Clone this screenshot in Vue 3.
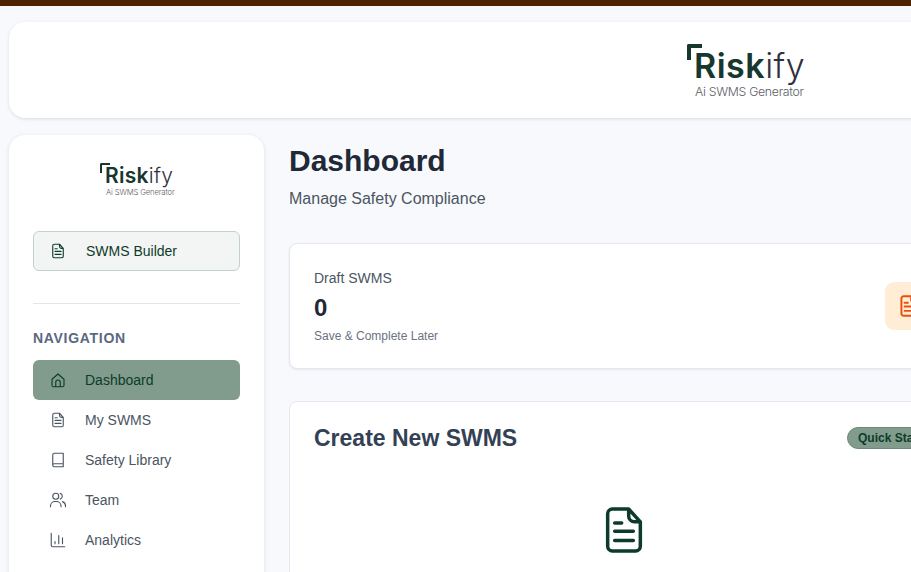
<template>
  <div class="page">
    <div class="top-strip"></div>

    <header class="header">
      <div class="logo logo-lg">
        <span class="logo-mark"></span>
        <div class="logo-word"><b>Risk</b><span>ify</span></div>
        <div class="logo-tag">Ai SWMS Generator</div>
      </div>
    </header>

    <div class="layout">
      <aside class="sidebar">
        <div class="sidebar-logo">
          <div class="logo logo-sm">
            <span class="logo-mark"></span>
            <div class="logo-word"><b>Risk</b><span>ify</span></div>
            <div class="logo-tag">Ai SWMS Generator</div>
          </div>
        </div>

        <button class="builder-btn">
          <svg class="nav-icon" viewBox="0 0 24 24" fill="none" stroke="currentColor" stroke-linecap="round" stroke-linejoin="round">
            <path :d="fileIcon" />
          </svg>
          <span>SWMS Builder</span>
        </button>

        <div class="divider"></div>

        <div class="nav-title">NAVIGATION</div>
        <nav class="nav">
          <a v-for="item in navItems" :key="item.label" :class="['nav-item', { active: item.active }]">
            <svg class="nav-icon" viewBox="0 0 24 24" fill="none" stroke="currentColor" stroke-linecap="round" stroke-linejoin="round">
              <path :d="item.icon" />
            </svg>
            <span>{{ item.label }}</span>
          </a>
        </nav>
      </aside>

      <main class="main">
        <h1>Dashboard</h1>
        <p class="subtitle">Manage Safety Compliance</p>

        <section class="stat-card">
          <div>
            <div class="stat-label">Draft SWMS</div>
            <div class="stat-value">0</div>
            <div class="stat-note">Save &amp; Complete Later</div>
          </div>
          <div class="stat-icon">
            <svg viewBox="0 0 24 24" fill="none" stroke="currentColor" stroke-width="1.8" stroke-linecap="round" stroke-linejoin="round">
              <path :d="fileIcon" />
            </svg>
          </div>
        </section>

        <section class="create-card">
          <div class="create-head">
            <h2>Create New SWMS</h2>
            <span class="badge">Quick Start</span>
          </div>
          <div class="create-body">
            <svg viewBox="0 0 24 24" fill="none" stroke="currentColor" stroke-width="1.5" stroke-linecap="round" stroke-linejoin="round">
              <path :d="fileIcon" />
            </svg>
          </div>
        </section>
      </main>
    </div>
  </div>
</template>

<script setup>
const fileIcon = 'M8 9h3M8 12.5h8M8 16.5h8M17 21H7a2 2 0 0 1-2-2V5a2 2 0 0 1 2-2h7l5 5.5V19a2 2 0 0 1-2 2zM14 3v3a2.5 2.5 0 0 0 2.5 2.5H19'

const navItems = [
  {
    label: 'Dashboard',
    active: true,
    icon: 'M4 11l8-7 8 7v8a2 2 0 0 1-2 2H6a2 2 0 0 1-2-2zM9 21v-6a3 3 0 0 1 6 0v6'
  },
  { label: 'My SWMS', icon: fileIcon },
  {
    label: 'Safety Library',
    icon: 'M5 19V5a2 2 0 0 1 2-2h12v18H7a2 2 0 0 1-2-2zM5 19a2 2 0 0 1 2-2h12'
  },
  {
    label: 'Team',
    icon: 'M9 11a4 4 0 1 0 0-8 4 4 0 0 0 0 8zM2 21v-1a6 6 0 0 1 6-6h2a6 6 0 0 1 6 6v1M15 3.2a4 4 0 0 1 0 7.6M18 14.2a6 6 0 0 1 4 5.8v1'
  },
  {
    label: 'Analytics',
    icon: 'M3 3v16a2 2 0 0 0 2 2h16M8 17v-3M13 17V6M18 17V9'
  }
]
</script>

<style>
html,
body {
  margin: 0;
  overflow: hidden;
}
</style>

<style scoped>
.page {
  width: 911px;
  height: 572px;
  overflow: hidden;
  background: #f8f9fc;
  font-family: "Liberation Sans", Arial, sans-serif;
  color: #1f2937;
}

.top-strip {
  height: 6px;
  background: #4a2500;
}

.header {
  width: 1472px;
  height: 96px;
  margin: 16px 0 17px 9px;
  display: flex;
  align-items: center;
  justify-content: center;
  background: #fff;
  border-radius: 16px;
  box-shadow: 0 1px 3px rgba(30, 41, 80, 0.14);
}

.logo {
  position: relative;
  font-family: Inter, sans-serif;
  line-height: 1;
  white-space: nowrap;
}

.logo-word b {
  font-weight: 600;
  color: #16382f;
}

.logo-word span {
  font-weight: 300;
  color: #322f3d;
}

.logo-tag {
  font-weight: 300;
  color: #5d5d66;
}

.logo-mark {
  position: absolute;
  left: 0;
  top: 0;
  box-sizing: border-box;
  border-style: solid;
  border-color: #16382f;
  border-width: 0;
  border-top-left-radius: 2px;
}

.logo-lg {
  width: 116px;
  height: 54px;
  margin-top: 2px;
}

.logo-lg .logo-word {
  padding: 5px 0 0 7px;
  font-size: 34px;
  letter-spacing: 0.5px;
}

.logo-lg .logo-tag {
  margin-top: 3px;
  padding-left: 8px;
  font-size: 12.3px;
  letter-spacing: -0.3px;
}

.logo-lg .logo-mark {
  width: 15px;
  height: 16px;
  border-top-width: 4.5px;
  border-left-width: 4.5px;
}

.layout {
  display: flex;
  gap: 25px;
  margin-left: 9px;
}

.sidebar {
  flex: none;
  width: 255px;
  height: 600px;
  box-sizing: border-box;
  padding: 28px 24px 0;
  background: #fff;
  border-radius: 16px;
  box-shadow: 0 1px 4px rgba(30, 41, 80, 0.12);
}

.sidebar-logo {
  display: flex;
  justify-content: center;
  height: 68px;
}

.logo-sm {
  width: 73px;
  height: 34px;
}

.logo-sm .logo-word {
  padding: 2px 0 0 5px;
  font-size: 21px;
  letter-spacing: 0.25px;
}

.logo-sm .logo-tag {
  margin-top: 3.4px;
  padding-left: 6px;
  font-size: 7.7px;
  letter-spacing: -0.15px;
}

.logo-sm .logo-mark {
  width: 10px;
  height: 10px;
  border-top-width: 2.8px;
  border-left-width: 2.8px;
}

.builder-btn {
  width: 100%;
  height: 40px;
  display: flex;
  align-items: center;
  gap: 19px;
  padding: 0 16px 0 15px;
  box-sizing: border-box;
  background: #f2f5f3;
  border: 1px solid #c0d2ca;
  border-radius: 6px;
  color: #0d3b2b;
  font: 14px "Liberation Sans", Arial, sans-serif;
}

.divider {
  height: 1px;
  margin: 32px 0 26px;
  background: #e2e5ee;
}

.nav-title {
  font-size: 14px;
  font-weight: 700;
  line-height: 16px;
  letter-spacing: 0.7px;
  color: #5a6880;
  margin-bottom: 14px;
}

.nav {
  display: flex;
  flex-direction: column;
}

.nav-item {
  height: 40px;
  display: flex;
  align-items: center;
  gap: 18px;
  padding: 0 16px;
  border-radius: 6px;
  font-size: 14px;
  color: #4b5563;
}

.nav-item.active {
  background: #819c8c;
  color: #0d3b2b;
}

.nav-icon {
  flex: none;
  width: 18px;
  height: 18px;
  stroke-width: 1.5;
}

.main {
  flex: none;
  width: 670px;
  padding-top: 8px;
}

h1 {
  margin: 0;
  font-size: 30px;
  line-height: 36px;
  font-weight: 700;
  color: #1f2937;
}

.subtitle {
  margin: 8px 0 0;
  font-size: 16px;
  line-height: 24px;
  color: #4b5563;
}

.stat-card {
  height: 124px;
  margin-top: 32px;
  padding: 0 25px 0 24px;
  display: flex;
  align-items: center;
  justify-content: space-between;
  background: #fff;
  border: 1px solid #e4e7f0;
  border-radius: 8px;
  box-shadow: 0 1px 2px rgba(30, 41, 80, 0.08);
}

.stat-label {
  font-size: 14px;
  line-height: 20px;
  color: #4b5563;
}

.stat-value {
  margin-top: 4px;
  font-size: 24px;
  line-height: 32px;
  font-weight: 700;
  color: #1f2937;
}

.stat-note {
  margin-top: 4px;
  font-size: 12px;
  line-height: 16px;
  color: #6b7280;
}

.stat-icon {
  width: 48px;
  height: 48px;
  display: flex;
  align-items: center;
  justify-content: center;
  background: #ffedd5;
  border-radius: 9px;
  color: #ea4f0c;
}

.stat-icon svg {
  width: 26px;
  height: 26px;
}

.create-card {
  height: 300px;
  margin-top: 32px;
  padding: 24px;
  box-sizing: border-box;
  background: #fff;
  border: 1px solid #e4e7f0;
  border-radius: 8px;
}

.create-head {
  display: flex;
  align-items: center;
  justify-content: space-between;
}

h2 {
  margin: 0;
  font-size: 23px;
  line-height: 24px;
  font-weight: 700;
  color: #334155;
}

.badge {
  padding: 3px 11px 3px 10px;
  border-radius: 999px;
  border: 1px solid #6d8a79;
  background: #819c8c;
  color: #0d3b2b;
  font-size: 12px;
  line-height: 14px;
  font-weight: 700;
}

.create-body {
  display: flex;
  justify-content: center;
  margin-top: 52px;
  color: #0d3b2b;
}

.create-body svg {
  width: 56px;
  height: 56px;
}
</style>
